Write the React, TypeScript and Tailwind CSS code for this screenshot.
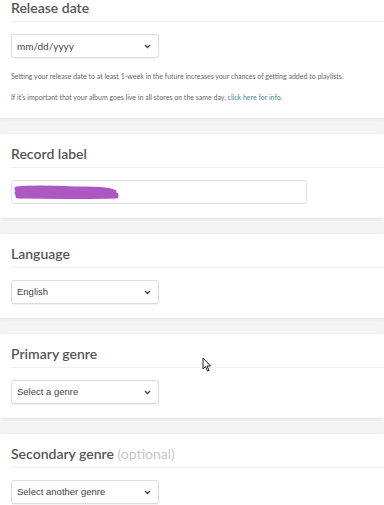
import { ReactNode } from 'react';

function Chevron() {
  return (
    <svg width="7" height="5" viewBox="0 0 7 5" className="shrink-0">
      <path d="M1 1 L3.5 3.5 L6 1" fill="none" stroke="#444" strokeWidth="1.3" />
    </svg>
  );
}

function Select({ label, lato = false }: { label: string; lato?: boolean }) {
  return (
    <div className="w-[148px] h-[24px] border border-[#dcdcdc] rounded-[3px] bg-white shadow-[0_1px_2px_rgba(0,0,0,0.06)] flex items-center justify-between pl-[5px] pr-[7px]">
      <span
        className={
          lato
            ? "text-[10px] text-[#444] font-['Lato',sans-serif]"
            : "text-[9.5px] text-[#444] font-['Liberation_Sans',Arial,sans-serif]"
        }
      >
        {label}
      </span>
      <Chevron />
    </div>
  );
}

function Card({ title, children }: { title: ReactNode; children: ReactNode }) {
  return (
    <section className="bg-white shadow-[0_1px_3px_rgba(0,0,0,0.07)] pl-[11px] pt-[10px]">
      <h2 className="text-[14px] leading-[19px] font-semibold text-[#555] border-b border-[#f0f0f0] pb-[4px]">
        {title}
      </h2>
      {children}
    </section>
  );
}

export default function App() {
  return (
    <div className="relative w-[384px] h-[505px] overflow-hidden bg-[#f4f4f4] font-['Lato',sans-serif]">
      <div className="flex flex-col gap-[16px] mt-[-12px]">
        <Card title="Release date">
          <div className="pt-[12px] pb-[16px]">
            <Select label="mm/dd/yyyy" lato />
            <p className="mt-[14px] text-[7px] leading-[9px] text-[#666] whitespace-nowrap">
              Setting your release date to at least 1-week in the future increases your chances of getting added to playlists.
            </p>
            <p className="mt-[12px] text-[7px] leading-[9px] text-[#666] whitespace-nowrap">
              If it's important that your album goes live in all stores on the same day,{' '}
              <span className="text-[#3f8a8f]">click here for info.</span>
            </p>
          </div>
        </Card>

        <Card title="Record label">
          <div className="pt-[12px] pb-[14px]">
            <div className="w-[296px] h-[24px] border border-[#e2e2e2] rounded-[3px] bg-white flex items-center pl-[2px]">
              <svg width="106" height="16" viewBox="0 0 106 16">
                <path
                  d="M3 5 C20 3 40 4 60 5 C75 5 90 4 100 8 M3 9 C25 8 50 9 75 9 C88 9 96 10 102 11 M4 12 C30 12 60 13 102 12"
                  fill="none"
                  stroke="#a445bd"
                  strokeWidth="5"
                  strokeLinecap="round"
                  opacity="0.9"
                />
              </svg>
            </div>
          </div>
        </Card>

        <Card title="Language">
          <div className="pt-[12px] pb-[14px]">
            <Select label="English" />
          </div>
        </Card>

        <Card title="Primary genre">
          <div className="pt-[12px] pb-[14px]">
            <Select label="Select a genre" />
          </div>
        </Card>

        <Card
          title={
            <>
              Secondary genre <span className="font-normal text-[#c8c8c8]">(optional)</span>
            </>
          }
        >
          <div className="pt-[12px] pb-[14px]">
            <Select label="Select another genre" />
          </div>
        </Card>
      </div>

      <svg className="absolute left-[202px] top-[357px]" width="10" height="15" viewBox="0 0 10 15">
        <path d="M1 1 L1 12 L3.5 9.5 L5.5 14 L7 13.3 L5 9 L8.5 9 Z" fill="#fff" stroke="#222" strokeWidth="1" strokeLinejoin="round" />
      </svg>
    </div>
  );
}
